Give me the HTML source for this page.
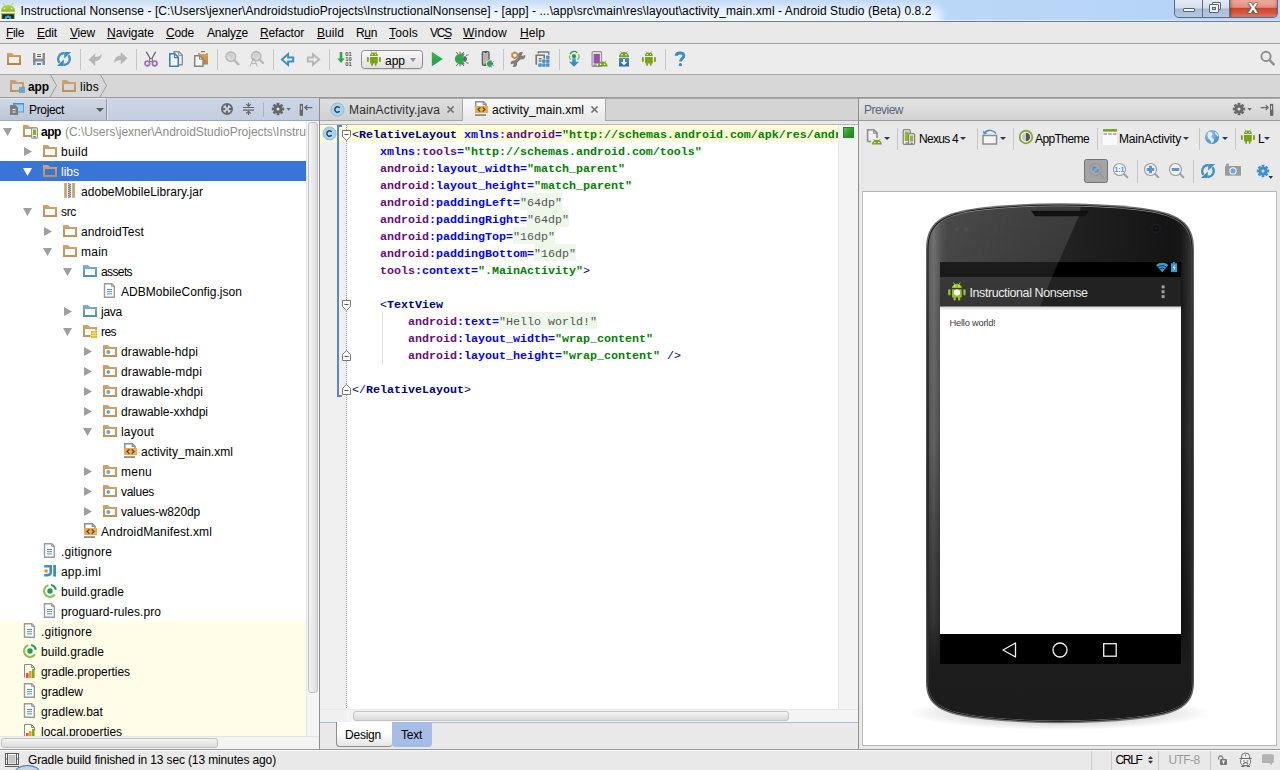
<!DOCTYPE html>
<html lang="en"><head><meta charset="utf-8"><title>Instructional Nonsense - Android Studio</title>
<style>
html,body{margin:0;padding:0;}
body{width:1280px;height:770px;overflow:hidden;position:relative;background:#e9e9e9;font-family:'Liberation Sans',sans-serif;font-size:12px;color:#000;}
div,span.t,svg.i{position:absolute;box-sizing:border-box;}
span.t{white-space:pre;}
svg.i{overflow:visible;}
u{text-decoration:underline;}
</style></head><body>
<div style="left:0px;top:0px;width:1280px;height:21px;background:linear-gradient(90deg,#c9ddf4 0%,#c3daf5 40%,#bad7f7 75%,#b4d3f6 100%);overflow:hidden;"><div style="left:-20px;top:6px;width:962px;height:30px;background:rgba(255,255,255,.75);border-radius:12px;filter:blur(5px);"></div><div style="left:0px;top:19px;width:1280px;height:2px;background:linear-gradient(180deg,rgba(255,255,255,0),rgba(255,255,255,.5));"></div></div><div style="left:0px;top:21px;width:1280px;height:1px;background:#6f7f96;"></div><svg class="i" style="left:0px;top:0px" width="16" height="20" viewBox="0 0 16 20"><defs><linearGradient id="lg" x1="0" y1="0" x2="0" y2="1"><stop offset="0" stop-color="#b5d94c"/><stop offset="1" stop-color="#8db82a"/></linearGradient><clipPath id="lc"><rect x="2.200" y="14.200" width="11.700" height="4.700"/></clipPath></defs><path d="M1.100 11.700V10.500a6.950 5.800 0 0 1 13.900 0v1.200z" fill="url(#lg)"/><path d="M3.300 3.400l1.400 1.900M12.800 3.400l-1.400 1.900" stroke="#a6cf45" stroke-width=".9" stroke-linecap="round"/><circle cx="4.500" cy="8.500" r=".8" fill="#f4fadf"/><circle cx="11.600" cy="8.500" r=".8" fill="#f4fadf"/><rect x="1.100" y="13.100" width="13.900" height="5.800" fill="#9bc63a"/><rect x="2.200" y="14.200" width="11.700" height="4.700" fill="#2b2530"/><g clip-path="url(#lc)"><path d="M8.00 15.00L9.15 16.53L11.04 16.26L10.77 18.15L12.30 19.30L10.77 20.45L11.04 22.34L9.15 22.07L8.00 23.60L6.85 22.07L4.96 22.34L5.23 20.45L3.70 19.30L5.23 18.15L4.96 16.26L6.85 16.53z" fill="#33b5e5"/><circle cx="8" cy="19.300" r="1.400" fill="#15151a"/></g></svg><span class="t" style="left:20.5px;top:3px;line-height:16px;color:#000;letter-spacing:0.069px;">Instructional Nonsense - [C:\Users\jexner\AndroidstudioProjects\InstructionalNonsense] - [app] - ...\app\src\main\res\layout\activity_main.xml - Android Studio (Beta) 0.8.2</span><div style="left:1174px;top:0px;width:104px;height:18px;border:1px solid #5a6b85;border-top:none;border-radius:0 0 5px 5px;background:linear-gradient(180deg,#e3ecf6 0%,#d3deec 48%,#a9bbd4 52%,#b7c8df 100%);overflow:hidden;"><div style="left:27px;top:0px;width:1px;height:18px;background:#5a6b85;"></div><div style="left:54px;top:0px;width:1px;height:18px;background:#5a6b85;"></div><div style="left:55px;top:-1px;width:48px;height:18px;background:linear-gradient(180deg,#f0b3a8 0%,#e48c7c 46%,#cc452d 52%,#d45a42 80%,#e08a78 100%);box-shadow:inset 2px 0 3px -1px rgba(120,20,10,.5),inset -2px 0 3px -1px rgba(120,20,10,.5);"></div><div style="left:8px;top:8px;width:12px;height:4px;background:#f4f4f4;border:1px solid #55607a;border-radius:1px;"></div><div style="left:37px;top:2px;width:9px;height:8px;background:#f4f4f4;border:1px solid #55607a;border-radius:1px;"></div><div style="left:34px;top:4px;width:10px;height:9px;background:#f4f4f4;border:1px solid #55607a;border-radius:1px;"></div><div style="left:37px;top:7px;width:4px;height:3px;background:#b9c8dd;border:1px solid #55607a;"></div><span class="t" style="left:73px;top:-3.500px;font-size:18px;font-weight:700;line-height:20px;color:#fff;text-shadow:0 0 1px #222,0 0 1px #333,0 0 2px #444;">x</span></div><div style="left:0px;top:22px;width:1280px;height:21px;background:#e9e9e9;"></div><div style="left:0px;top:43px;width:1280px;height:1px;background:#a0a0a0;"></div><span class="t" style="left:6px;top:25px;line-height:16px;color:#000;letter-spacing:-0.336px;"><u>F</u>ile</span><span class="t" style="left:37px;top:25px;line-height:16px;color:#000;letter-spacing:-0.172px;"><u>E</u>dit</span><span class="t" style="left:70px;top:25px;line-height:16px;color:#000;letter-spacing:-0.199px;"><u>V</u>iew</span><span class="t" style="left:107px;top:25px;line-height:16px;color:#000;letter-spacing:-0.047px;"><u>N</u>avigate</span><span class="t" style="left:166px;top:25px;line-height:16px;color:#000;letter-spacing:-0.172px;"><u>C</u>ode</span><span class="t" style="left:207px;top:25px;line-height:16px;color:#000;letter-spacing:-0.243px;">Analy<u>z</u>e</span><span class="t" style="left:260px;top:25px;line-height:16px;color:#000;letter-spacing:-0.170px;"><u>R</u>efactor</span><span class="t" style="left:317px;top:25px;line-height:16px;color:#000;letter-spacing:0.062px;"><u>B</u>uild</span><span class="t" style="left:356px;top:25px;line-height:16px;color:#000;letter-spacing:-0.339px;">R<u>u</u>n</span><span class="t" style="left:389px;top:25px;line-height:16px;color:#000;letter-spacing:0.197px;"><u>T</u>ools</span><span class="t" style="left:430px;top:25px;line-height:16px;color:#000;letter-spacing:-1.229px;">VC<u>S</u></span><span class="t" style="left:463px;top:25px;line-height:16px;color:#000;letter-spacing:0.219px;"><u>W</u>indow</span><span class="t" style="left:520px;top:25px;line-height:16px;color:#000;letter-spacing:0.078px;"><u>H</u>elp</span><div style="left:0px;top:44px;width:1280px;height:30px;background:#ececec;"></div><div style="left:80px;top:49px;width:1px;height:21px;background:#c4c4c4;"></div><div style="left:136px;top:49px;width:1px;height:21px;background:#c4c4c4;"></div><div style="left:217px;top:49px;width:1px;height:21px;background:#c4c4c4;"></div><div style="left:273px;top:49px;width:1px;height:21px;background:#c4c4c4;"></div><div style="left:329px;top:49px;width:1px;height:21px;background:#c4c4c4;"></div><div style="left:503px;top:49px;width:1px;height:21px;background:#c4c4c4;"></div><div style="left:559px;top:49px;width:1px;height:21px;background:#c4c4c4;"></div><div style="left:665px;top:49px;width:1px;height:21px;background:#c4c4c4;"></div><svg class="i" style="left:6px;top:51px" width="16" height="16" viewBox="0 0 16 16"><defs><linearGradient id="g1" x1="0" y1="0" x2="0" y2="1"><stop offset="0" stop-color="#d2a566"/><stop offset="1" stop-color="#b9803f"/></linearGradient></defs><path d="M1 2h5l2 2h7v10H1z" fill="url(#g1)"/><rect x="3" y="6" width="10" height="6" fill="#efefef"/></svg><svg class="i" style="left:31px;top:51px" width="16" height="16" viewBox="0 0 16 16"><path d="M2 2h12v12H2z" fill="#8c8c8c"/><rect x="4.500" y="2" width="7" height="5.500" fill="#fbfbfb"/><path d="M6 3.700h4M6 5.500h4" stroke="#555" stroke-width="1"/><rect x="4.500" y="10.500" width="7" height="3.500" fill="#ececec"/><rect x="6" y="12" width="4" height="2" fill="#3a8dc6"/></svg><svg class="i" style="left:56px;top:51px" width="16" height="16" viewBox="0 0 16 16"><path d="M8 2.200A5.800 5.800 0 0 0 3.600 11.800" fill="none" stroke="#3f8fc3" stroke-width="2.200"/><path d="M.900 14.900h6.900V8.400z" fill="#3f8fc3"/><path d="M8 13.800A5.800 5.800 0 0 0 12.400 4.200" fill="none" stroke="#3f8fc3" stroke-width="2.200"/><path d="M15.100 1.100H8.200v6.500z" fill="#3f8fc3"/></svg><svg class="i" style="left:87px;top:51px" width="16" height="16" viewBox="0 0 16 16"><path d="M1.700 8.700L8.200 2.300v3.600c2.500 0 5.300-.6 6.200-3.300.5 4.600-2.200 7.600-6.200 7.600V15z" fill="#b6b6b6"/></svg><svg class="i" style="left:112px;top:51px" width="16" height="16" viewBox="0 0 16 16"><path d="M15.300 7.300L8.800 1v3.600C4.800 4.600 2 7.600 2.500 12.200c.9-2.700 3.800-3.300 6.300-3.300v4.700z" fill="#b6b6b6"/></svg><svg class="i" style="left:143px;top:51px" width="16" height="16" viewBox="0 0 16 16"><path d="M3.300 .8l5.400 9.500M12.700 .8L7.300 10.300" stroke="#555" stroke-width="1.100" fill="none"/><rect x="6.700" y="7.800" width="2.600" height="2.800" fill="#f4f4f4" stroke="#555" stroke-width=".8"/><circle cx="4.300" cy="12.500" r="2.300" fill="none" stroke="#a06cc0" stroke-width="1.700"/><circle cx="11.700" cy="12.500" r="2.300" fill="none" stroke="#a06cc0" stroke-width="1.700"/></svg><svg class="i" style="left:168px;top:51px" width="16" height="16" viewBox="0 0 16 16"><path d="M6 .7h5l3.300 3.300v9.800H6z" fill="#f2f2f2" stroke="#909090" stroke-width="1.400"/><path d="M10.600 .7v3.700h3.700" fill="none" stroke="#909090" stroke-width="1"/><path d="M1.800 2.800h5l3.500 3.500v9H1.800z" fill="#f6f8fa" stroke="#3b82b4" stroke-width="1.600"/><path d="M6.500 2.800v3.800h3.800" fill="none" stroke="#3b82b4" stroke-width="1.200"/></svg><svg class="i" style="left:193px;top:51px" width="16" height="16" viewBox="0 0 16 16"><defs><linearGradient id="g2" x1="0" y1="0" x2="0" y2="1"><stop offset="0" stop-color="#d9a55c"/><stop offset="1" stop-color="#bd7f35"/></linearGradient></defs><path d="M5 2h2.200v.9h5.600V2H15v11.500H5z" fill="url(#g2)"/><path d="M8 .7h4" stroke="#666" stroke-width="1"/><path d="M1.700 4.700h5l3.300 3.300v7.300H1.700z" fill="#f4f4f4" stroke="#858585" stroke-width="1.500"/><path d="M6.500 4.700v3.500H10" fill="none" stroke="#858585" stroke-width="1"/></svg><svg class="i" style="left:224px;top:51px" width="16" height="16" viewBox="0 0 16 16"><circle cx="6.8" cy="5.7" r="4.7" fill="#dcdcdc" stroke="#b9b9b9" stroke-width="1.700"/><circle cx="6.8" cy="4.7" r="2.35" fill="#c9c9c9" opacity=".7"/><path d="M10.184 9.084L14.5 13.3" stroke="#b9b9b9" stroke-width="2.400" stroke-linecap="round"/></svg><svg class="i" style="left:249px;top:51px" width="16" height="16" viewBox="0 0 16 16"><circle cx="7.2" cy="5.2" r="4.5" fill="#dcdcdc" stroke="#b9b9b9" stroke-width="1.700"/><circle cx="7.2" cy="4.2" r="2.25" fill="#c9c9c9" opacity=".7"/><path d="M10.44 8.44L14 12" stroke="#b9b9b9" stroke-width="2.400" stroke-linecap="round"/><path d="M1 15.500L4.300 7.600h.8L8.400 15.500M2.300 12.600h4.800" fill="none" stroke="#b0b0b0" stroke-width="1"/></svg><svg class="i" style="left:280px;top:51px" width="16" height="16" viewBox="0 0 16 16"><path d="M1.900 8.500L8.100 3v3.500h5.100v4H8.100V14z" fill="#f4f4f4" stroke="#3a8ec6" stroke-width="1.900" stroke-linejoin="miter"/></svg><svg class="i" style="left:305px;top:51px" width="16" height="16" viewBox="0 0 16 16"><path d="M14.100 8.500L7.900 3v3.500H2.800v4h5.100V14z" fill="#ececec" stroke="#b6b6b6" stroke-width="1.900"/></svg><svg class="i" style="left:337px;top:51px" width="16" height="16" viewBox="0 0 16 16"><path d="M2.700 1h2.600v6.500h2.400L4 12 .300 7.500h2.400z" fill="#2fa84f"/><g font-family="Liberation Sans,sans-serif" font-size="6" font-weight="700" fill="#555"><text x="8.300" y="5.300" textLength="6.500" lengthAdjust="spacingAndGlyphs">01</text><text x="8.300" y="10.300" textLength="6.500" lengthAdjust="spacingAndGlyphs">10</text><text x="8.300" y="15.300" textLength="6.500" lengthAdjust="spacingAndGlyphs">01</text></g></svg><svg class="i" style="left:428px;top:51px" width="16" height="16" viewBox="0 0 16 16"><defs><linearGradient id="g3" x1="0" y1="0" x2="0" y2="1"><stop offset="0" stop-color="#3cb85a"/><stop offset="1" stop-color="#249743"/></linearGradient></defs><path d="M3.800 .8L14.800 8 3.800 15.200z" fill="url(#g3)"/></svg><svg class="i" style="left:453px;top:51px" width="16" height="16" viewBox="0 0 16 16"><path d="M11.600 2.800C5.500 1.300 1.900 4.500 1.900 8S5.500 14.700 11.600 13.200Q8.600 8 11.600 2.800z" fill="#2fa84f"/><path d="M10.600 5.300c1.700-.3 3.400 1 3.400 2.700s-1.700 3-3.400 2.700Q9.300 8 10.600 5.300z" fill="#666"/><path d="M3.200 1l2 2.300M7 .700v2M10.800 1L9.300 3M3.200 15l2-2.300M7 15.300v-2M10.800 15L9.300 13M12.600 5.600c.3-1.300 1.400-1.800 3-1.700M12.600 10.400c.3 1.300 1.400 1.800 3 1.700" fill="none" stroke="#555" stroke-width=".9"/><path d="M2.300 8h7" stroke="#23913f" stroke-width=".6"/></svg><svg class="i" style="left:479px;top:51px" width="16" height="16" viewBox="0 0 16 16"><rect x="3.300" y=".500" width="6.700" height="13.800" rx="1.300" fill="#b4b4b4" stroke="#555" stroke-width="1.200"/><rect x="5.700" y=".800" width="1.800" height=".900" fill="#111"/><rect x="5.700" y="12.600" width="1.800" height=".900" fill="#333"/><circle cx="11" cy="12.700" r="4.200" fill="#ececec"/><g transform="translate(6.700 8.400) scale(.54)"><path d="M11.600 2.800C5.500 1.300 1.900 4.500 1.900 8S5.500 14.700 11.600 13.200Q8.600 8 11.600 2.800z" fill="#2fa84f"/><path d="M10.600 5.300c1.700-.3 3.400 1 3.400 2.700s-1.700 3-3.400 2.700Q9.300 8 10.600 5.300z" fill="#666"/><path d="M3.200 1l2 2.300M7 .700v2M10.800 1L9.300 3M3.200 15l2-2.300M7 15.300v-2M10.800 15L9.300 13M12.600 5.600c.3-1.300 1.400-1.800 3-1.700M12.600 10.400c.3 1.300 1.400 1.800 3 1.700" fill="none" stroke="#555" stroke-width=".9"/><path d="M2.300 8h7" stroke="#23913f" stroke-width=".6"/></g></svg><svg class="i" style="left:510px;top:51px" width="16" height="16" viewBox="0 0 16 16"><path d="M4 12.600L11.400 5.200" stroke="#7d7d7d" stroke-width="3.200"/><circle cx="11.600" cy="4.700" r="3.700" fill="#7d7d7d"/><path d="M11.300 5l2-4.500 3.500 3.200z" fill="#ececec"/><circle cx="3.900" cy="12.700" r="3.200" fill="#7d7d7d"/><path d="M4.200 12.400l-2 4.300-3.300-3z" fill="#ececec"/><path d="M4.800 .300l3.500 2v4l-3.500 2-3.500-2v-4z" fill="#c98c45"/><circle cx="4.800" cy="4.300" r="1.700" fill="#ececec"/></svg><svg class="i" style="left:535px;top:51px" width="16" height="16" viewBox="0 0 16 16"><path d="M3.300 2.500V1h10.400v2.700" fill="none" stroke="#777" stroke-width="1.400"/><path d="M1.200 13.800V4.300h8v3.500" fill="none" stroke="#777" stroke-width="1.600"/><path d="M3.700 7.800h3M3.700 10h3" stroke="#444" stroke-width="1"/><rect x="11.2" y="4.7" width="3.200" height="3.200" fill="#2f7fb8"/><rect x="7.3" y="8.6" width="3.200" height="3.200" fill="#2f7fb8"/><rect x="11.2" y="8.6" width="3.200" height="3.200" fill="#2f7fb8"/><rect x="3.4" y="12.5" width="3.200" height="3.200" fill="#2f7fb8"/><rect x="7.3" y="12.5" width="3.200" height="3.200" fill="#2f7fb8"/><rect x="11.2" y="12.5" width="3.200" height="3.200" fill="#2f7fb8"/><path d="M12.800 4.700v3.200M11.200 6.300h3.200M8.900 8.600v3.200M7.300 10.200h3.200M12.800 8.600v3.200M11.200 10.200h3.200M5 12.500v3.200M3.400 14.100h3.200M8.900 12.500v3.200M7.300 14.100h3.200M12.800 12.500v3.200M11.200 14.100h3.200" stroke="#6fb0de" stroke-width=".5"/></svg><svg class="i" style="left:566px;top:51px" width="16" height="16" viewBox="0 0 16 16"><defs><linearGradient id="g4" x1="0" y1="0" x2="0" y2="1"><stop offset="0" stop-color="#4a9fd3"/><stop offset="1" stop-color="#2f7fb3"/></linearGradient></defs><path d="M11.300 1.700A4.500 4.500 0 0 0 4 3.200" fill="none" stroke="#2f9e4d" stroke-width="1.400"/><path d="M3.600 4.500A4.500 4.500 0 0 0 4.700 8.800M12.300 3a4.500 4.500 0 0 1-1 5.800" fill="none" stroke="#82c15a" stroke-width="1.400"/><circle cx="8" cy="5.200" r="2.100" fill="#2a9b4d"/><path d="M6.200 7.300h3.600v3.400H13L8 15.800 3 10.700h3.200z" fill="url(#g4)"/></svg><svg class="i" style="left:591px;top:51px" width="16" height="16" viewBox="0 0 16 16"><rect x="1.100" y=".600" width="9.300" height="14.800" rx="1" fill="#f4f4f4" stroke="#8d8d8d" stroke-width="1.200"/><rect x="2.600" y="2.800" width="6.300" height="9.800" fill="#9650b0"/><rect x="2.500" y="13.600" width="3" height="1" fill="#555"/><g transform="translate(6.800 9.600) scale(.98)"><g fill="#7aa21d"><path d="M0 6a5 5 0 0 1 10 0z"/><path d="M1.500 .3l1.500 2M8.500 .3L7 2.300" stroke="#7aa21d" stroke-width=".8" fill="none"/></g><circle cx="3" cy="3.800" r=".8" fill="#fff"/><circle cx="7" cy="3.800" r=".8" fill="#fff"/></g></svg><svg class="i" style="left:616px;top:51px" width="16" height="16" viewBox="0 0 16 16"><defs><linearGradient id="g5" x1="0" y1="0" x2="0" y2="1"><stop offset="0" stop-color="#4d90bb"/><stop offset="1" stop-color="#2f6d99"/></linearGradient></defs><g transform="translate(3 0)"><g fill="#7aa21d"><path d="M0 6a5 5 0 0 1 10 0z"/><path d="M1.500 .3l1.500 2M8.500 .3L7 2.300" stroke="#7aa21d" stroke-width=".8" fill="none"/></g><circle cx="3" cy="3.800" r=".8" fill="#fff"/><circle cx="7" cy="3.800" r=".8" fill="#fff"/></g><rect x="3" y="6.800" width="10" height="8.700" fill="url(#g5)"/><path d="M7 8h2v3h2.200L8 14.300 4.800 11H7z" fill="#fff"/></svg><svg class="i" style="left:641px;top:51px" width="16" height="16" viewBox="0 0 16 16"><g fill="#7aa21d"><path d="M4 5.900h7.800v6a.7.700 0 0 1-.7.700H4.700a.7.700 0 0 1-.7-.7z"/><path d="M4 4.900a3.900 3.300 0 0 1 7.800 0z"/><rect x=".900" y="5.900" width="1.900" height="5" rx=".9"/><rect x="13" y="5.900" width="1.900" height="5" rx=".9"/><rect x="5.200" y="12" width="1.800" height="2.900" rx=".8"/><rect x="8.800" y="12" width="1.800" height="2.900" rx=".8"/><path d="M5.200 .500l1 1.600M10.600 .500l-1 1.600" stroke="#7aa21d" stroke-width=".8" fill="none"/></g><circle cx="6.200" cy="3.400" r=".55" fill="#fff"/><circle cx="9.600" cy="3.400" r=".55" fill="#fff"/></svg><svg class="i" style="left:672px;top:51px" width="16" height="16" viewBox="0 0 16 16"><path d="M4 4.700C4.500 1.200 11.500 1 11.900 4.600c.3 2.500-3.500 3-3.500 5.900" fill="none" stroke="#3e8bc0" stroke-width="2.800"/><circle cx="8.400" cy="13.700" r="1.600" fill="#3e8bc0"/></svg><div style="left:361px;top:50px;width:62px;height:19px;border:1px solid #8e8e8e;border-radius:3.500px;background:linear-gradient(180deg,#f8f8f8,#e0e0e0);box-shadow:0 1px 0 rgba(0,0,0,.08);"></div><svg class="i" style="left:366px;top:51px" width="16" height="16" viewBox="0 0 16 16"><g fill="#7aa21d"><path d="M4 5.900h7.800v6a.7.700 0 0 1-.7.700H4.700a.7.700 0 0 1-.7-.7z"/><path d="M4 4.900a3.900 3.300 0 0 1 7.800 0z"/><rect x=".900" y="5.900" width="1.900" height="5" rx=".9"/><rect x="13" y="5.900" width="1.900" height="5" rx=".9"/><rect x="5.200" y="12" width="1.800" height="2.900" rx=".8"/><rect x="8.800" y="12" width="1.800" height="2.900" rx=".8"/><path d="M5.200 .500l1 1.600M10.600 .500l-1 1.600" stroke="#7aa21d" stroke-width=".8" fill="none"/></g><circle cx="6.200" cy="3.400" r=".55" fill="#fff"/><circle cx="9.600" cy="3.400" r=".55" fill="#fff"/></svg><span class="t" style="left:385px;top:52.5px;line-height:16px;color:#000;letter-spacing:-0.010px;">app</span><div style="left:410px;top:58px;width:0px;height:0px;border-left:3.500px solid transparent;border-right:3.500px solid transparent;border-top:4px solid #8c8c8c;"></div><svg class="i" style="left:1259px;top:51px" width="16" height="16" viewBox="0 0 16 16"><circle cx="7" cy="5.400" r="4.600" fill="none" stroke="#8e8e8e" stroke-width="1.900"/><path d="M10.500 9l4.200 4.300" stroke="#8e8e8e" stroke-width="2.500" stroke-linecap="round"/></svg><div style="left:0px;top:74px;width:1280px;height:24px;background:#d7d7d7;border-top:1px solid #a6a6a6;"></div><div style="left:0px;top:97px;width:1280px;height:1px;background:#9a9a9a;"></div><svg class="i" style="left:9px;top:78px" width="16" height="16" viewBox="0 0 16 16"><defs><linearGradient id="g6" x1="0" y1="0" x2="0" y2="1"><stop offset="0" stop-color="#cba671"/><stop offset="1" stop-color="#bd9158"/></linearGradient></defs><path d="M1 2h5l2 2h7v10H1z" fill="url(#g6)"/><rect x="3" y="6" width="10" height="6" fill="#d7d7d7"/><rect x="10" y="9" width="6" height="6" fill="#6ea6cf"/></svg><span class="t" style="left:28px;top:79px;line-height:16px;color:#000;font-weight:700;letter-spacing:-0.115px;">app</span><svg class="i" style="left:49px;top:74px" width="9" height="23" viewBox="0 0 9 23"><path d="M1 0L7.5 11.5L1 23" fill="none" stroke="#9c9c9c" stroke-width="1"/></svg><svg class="i" style="left:61px;top:78px" width="16" height="16" viewBox="0 0 16 16"><defs><linearGradient id="g7" x1="0" y1="0" x2="0" y2="1"><stop offset="0" stop-color="#cba671"/><stop offset="1" stop-color="#bd9158"/></linearGradient></defs><path d="M1 2h5l2 2h7v10H1z" fill="url(#g7)"/><rect x="3" y="6" width="10" height="6" fill="#d7d7d7"/></svg><span class="t" style="left:80px;top:79px;line-height:16px;color:#000;letter-spacing:0.246px;">libs</span><svg class="i" style="left:99px;top:74px" width="9" height="23" viewBox="0 0 9 23"><path d="M1 0L7.5 11.5L1 23" fill="none" stroke="#9c9c9c" stroke-width="1"/></svg><div style="left:0px;top:98px;width:319px;height:23px;background:linear-gradient(180deg,#ccd6e6,#c3cee0);border-bottom:1px solid #9aa7bd;"></div><div style="left:0px;top:98px;width:107px;height:22px;background:linear-gradient(180deg,#cfd7e4,#bcc6d6);border-right:1px solid #8f9aae;border-top:1px solid #e3e9f2;box-shadow:1px 0 0 #d9e0eb;"></div><svg class="i" style="left:8px;top:101px" width="16" height="16" viewBox="0 0 16 16"><rect x="5.500" y="2.500" width="10" height="8.500" fill="#a3d2f1" stroke="#5a9fd0"/><path d="M5 2.800h11" stroke="#3f8cc4" stroke-width="1.400"/><path d="M2 4h5.500L10 6.500V14H2z" fill="#7b7b7b"/><path d="M4.500 8.500h3M4.500 11h3" stroke="#fff" stroke-width="1.200"/></svg><span class="t" style="left:29px;top:102px;line-height:16px;color:#000;letter-spacing:-0.337px;">Project</span><div style="left:96px;top:108px;width:0px;height:0px;border-left:4px solid transparent;border-right:4px solid transparent;border-top:4.500px solid #5a5a5a;"></div><svg class="i" style="left:219px;top:101px" width="16" height="16" viewBox="0 0 16 16"><circle cx="8" cy="8" r="5" fill="none" stroke="#676767" stroke-width="2"/><path d="M8 3v3.200M8 9.800V13M3 8h3.200M9.800 8H13" stroke="#676767" stroke-width="2"/></svg><svg class="i" style="left:241px;top:101px" width="16" height="16" viewBox="0 0 16 16"><path d="M2 6.500h11M2 9.200h11" stroke="#676767" stroke-width="1.200"/><path d="M7.500 1.800v3.400M5.300 3.200l2.200 2.200 2.200-2.200M7.500 14v-3.400M5.300 12.500l2.200-2.200 2.200 2.200" fill="none" stroke="#676767" stroke-width="1.200"/></svg><div style="left:263px;top:102px;width:1px;height:15px;background:#a9b2c3;"></div><svg class="i" style="left:271px;top:101px" width="16" height="16" viewBox="0 0 16 16"><g transform="translate(7 8)" fill="#676767"><rect x="-1.400" y="-6.200" width="2.800" height="3" transform="rotate(0)"/><rect x="-1.400" y="-6.200" width="2.800" height="3" transform="rotate(45)"/><rect x="-1.400" y="-6.200" width="2.800" height="3" transform="rotate(90)"/><rect x="-1.400" y="-6.200" width="2.800" height="3" transform="rotate(135)"/><rect x="-1.400" y="-6.200" width="2.800" height="3" transform="rotate(180)"/><rect x="-1.400" y="-6.200" width="2.800" height="3" transform="rotate(225)"/><rect x="-1.400" y="-6.200" width="2.800" height="3" transform="rotate(270)"/><rect x="-1.400" y="-6.200" width="2.800" height="3" transform="rotate(315)"/><circle r="4.300"/><circle r="1.500" fill="#fff" fill-opacity=".8"/></g><path d="M15.500 7h4.200l-2.100 2.700z" fill="#676767"/></svg><svg class="i" style="left:298px;top:101px" width="16" height="16" viewBox="0 0 16 16"><rect x="2.400" y="3.500" width="2" height="10.500" fill="#e8ecf3" stroke="#676767" stroke-width="1.200"/><rect x="1.800" y="8.700" width="3.200" height="5.800" fill="#676767"/><path d="M6.800 6.600h7.500M9.300 4.200L6.800 6.600l2.500 2.400" fill="none" stroke="#676767" stroke-width="1.200"/></svg><div style="left:0px;top:121px;width:306px;height:615px;background:#fff;overflow:hidden;"><div style="left:0px;top:500px;width:307px;height:120px;background:#fffde7;"></div><div style="left:0px;top:40px;width:307px;height:20px;background:#3875d7;"></div><svg class="i" style="left:0px;top:2px" width="16" height="16" viewBox="0 0 16 16"><path d="M3 5h9L7.500 13z" fill="#9e9e9e"/></svg><svg class="i" style="left:22px;top:2px" width="16" height="16" viewBox="0 0 16 16"><defs><linearGradient id="g8" x1="0" y1="0" x2="0" y2="1"><stop offset="0" stop-color="#cba671"/><stop offset="1" stop-color="#bd9158"/></linearGradient></defs><path d="M1 2h5l2 2h7v10H1z" fill="url(#g8)"/><rect x="3" y="6" width="10" height="6" fill="#fff"/><rect x="9.700" y="5" width="5.700" height="10.300" rx=".8" fill="#fff" stroke="#8b8b8b" stroke-width="1.100"/><rect x="11" y="6.500" width="3.100" height="5.600" fill="#86b31b"/><rect x="11.300" y="13.300" width="2.500" height="1.100" fill="#444"/></svg><span class="t" style="left:41px;top:1px;line-height:20px;color:#000;font-weight:700;letter-spacing:-0.448px;">app</span><span class="t" style="left:65px;top:1px;line-height:20px;color:#8c8c8c;letter-spacing:-0.025px;">(C:\Users\jexner\AndroidStudioProjects\InstructionalNonsense\app)</span><svg class="i" style="left:20px;top:22px" width="16" height="16" viewBox="0 0 16 16"><path d="M4 4l8 4.500-8 4.500z" fill="#9e9e9e"/></svg><svg class="i" style="left:42px;top:22px" width="16" height="16" viewBox="0 0 16 16"><defs><linearGradient id="g9" x1="0" y1="0" x2="0" y2="1"><stop offset="0" stop-color="#cba671"/><stop offset="1" stop-color="#bd9158"/></linearGradient></defs><path d="M1 2h5l2 2h7v10H1z" fill="url(#g9)"/><rect x="3" y="6" width="10" height="6" fill="#fff"/></svg><span class="t" style="left:61px;top:21px;line-height:20px;color:#000;letter-spacing:0.328px;">build</span><svg class="i" style="left:20px;top:42px" width="16" height="16" viewBox="0 0 16 16"><path d="M3 5h9L7.500 13z" fill="#fff"/></svg><svg class="i" style="left:42px;top:42px" width="16" height="16" viewBox="0 0 16 16"><defs><linearGradient id="g10" x1="0" y1="0" x2="0" y2="1"><stop offset="0" stop-color="#cba671"/><stop offset="1" stop-color="#bd9158"/></linearGradient></defs><path d="M1 2h5l2 2h7v10H1z" fill="url(#g10)"/><rect x="3" y="6" width="10" height="6" fill="#3875d7"/></svg><span class="t" style="left:61px;top:41px;line-height:20px;color:#fff;">libs</span><svg class="i" style="left:62px;top:62px" width="16" height="16" viewBox="0 0 16 16"><rect x="2.200" y="0" width="2.700" height="14.800" fill="#c9a26c"/><rect x="10.100" y="0" width="2.800" height="14.800" fill="#c9a26c"/><rect x="4.900" y="0" width="5.200" height="14.800" fill="#f4f4f4"/><path d="M6 .5l3 1l-3 1l3 1l-3 1l3 1l-3 1l3 1l-3 1l3 1l-3 1l3 1l-3 1l3 1l-3 1" fill="none" stroke="#6a6a6a" stroke-width=".9"/></svg><span class="t" style="left:81px;top:61px;line-height:20px;color:#000;letter-spacing:0.037px;">adobeMobileLibrary.jar</span><svg class="i" style="left:20px;top:82px" width="16" height="16" viewBox="0 0 16 16"><path d="M3 5h9L7.500 13z" fill="#9e9e9e"/></svg><svg class="i" style="left:42px;top:82px" width="16" height="16" viewBox="0 0 16 16"><defs><linearGradient id="g11" x1="0" y1="0" x2="0" y2="1"><stop offset="0" stop-color="#cba671"/><stop offset="1" stop-color="#bd9158"/></linearGradient></defs><path d="M1 2h5l2 2h7v10H1z" fill="url(#g11)"/><rect x="3" y="6" width="10" height="6" fill="#fff"/></svg><span class="t" style="left:61px;top:81px;line-height:20px;color:#000;letter-spacing:-0.333px;">src</span><svg class="i" style="left:40px;top:102px" width="16" height="16" viewBox="0 0 16 16"><path d="M4 4l8 4.500-8 4.500z" fill="#9e9e9e"/></svg><svg class="i" style="left:62px;top:102px" width="16" height="16" viewBox="0 0 16 16"><defs><linearGradient id="g12" x1="0" y1="0" x2="0" y2="1"><stop offset="0" stop-color="#cba671"/><stop offset="1" stop-color="#bd9158"/></linearGradient></defs><path d="M1 2h5l2 2h7v10H1z" fill="url(#g12)"/><rect x="3" y="6" width="10" height="6" fill="#fff"/></svg><span class="t" style="left:81px;top:101px;line-height:20px;color:#000;letter-spacing:0.087px;">androidTest</span><svg class="i" style="left:40px;top:122px" width="16" height="16" viewBox="0 0 16 16"><path d="M3 5h9L7.500 13z" fill="#9e9e9e"/></svg><svg class="i" style="left:62px;top:122px" width="16" height="16" viewBox="0 0 16 16"><defs><linearGradient id="g13" x1="0" y1="0" x2="0" y2="1"><stop offset="0" stop-color="#cba671"/><stop offset="1" stop-color="#bd9158"/></linearGradient></defs><path d="M1 2h5l2 2h7v10H1z" fill="url(#g13)"/><rect x="3" y="6" width="10" height="6" fill="#fff"/></svg><span class="t" style="left:81px;top:121px;line-height:20px;color:#000;letter-spacing:0.246px;">main</span><svg class="i" style="left:60px;top:142px" width="16" height="16" viewBox="0 0 16 16"><path d="M3 5h9L7.500 13z" fill="#9e9e9e"/></svg><svg class="i" style="left:82px;top:142px" width="16" height="16" viewBox="0 0 16 16"><defs><linearGradient id="g14" x1="0" y1="0" x2="0" y2="1"><stop offset="0" stop-color="#7fb2d6"/><stop offset="1" stop-color="#4f8fbd"/></linearGradient></defs><path d="M1 2h5l2 2h7v10H1z" fill="url(#g14)"/><rect x="3" y="6" width="10" height="6" fill="#fff"/></svg><span class="t" style="left:101px;top:141px;line-height:20px;color:#000;letter-spacing:-0.615px;">assets</span><svg class="i" style="left:102px;top:162px" width="16" height="16" viewBox="0 0 16 16"><path d="M2.500 .700h7.200l2.600 2.600v10.900h-9.800z" fill="#fff" stroke="#9a9a9a" stroke-width="1.400"/><path d="M9.600 .700v2.700h2.700" fill="none" stroke="#9a9a9a" stroke-width="1"/><path d="M5 6.500h5M5 8.700h5M5 10.900h5" stroke="#4a90c2" stroke-width="1"/></svg><span class="t" style="left:121px;top:161px;line-height:20px;color:#000;letter-spacing:0.047px;">ADBMobileConfig.json</span><svg class="i" style="left:60px;top:182px" width="16" height="16" viewBox="0 0 16 16"><path d="M4 4l8 4.500-8 4.500z" fill="#9e9e9e"/></svg><svg class="i" style="left:82px;top:182px" width="16" height="16" viewBox="0 0 16 16"><defs><linearGradient id="g15" x1="0" y1="0" x2="0" y2="1"><stop offset="0" stop-color="#7fb2d6"/><stop offset="1" stop-color="#4f8fbd"/></linearGradient></defs><path d="M1 2h5l2 2h7v10H1z" fill="url(#g15)"/><rect x="3" y="6" width="10" height="6" fill="#fff"/></svg><span class="t" style="left:101px;top:181px;line-height:20px;color:#000;letter-spacing:-0.254px;">java</span><svg class="i" style="left:60px;top:202px" width="16" height="16" viewBox="0 0 16 16"><path d="M3 5h9L7.500 13z" fill="#9e9e9e"/></svg><svg class="i" style="left:82px;top:202px" width="16" height="16" viewBox="0 0 16 16"><defs><linearGradient id="g16" x1="0" y1="0" x2="0" y2="1"><stop offset="0" stop-color="#cba671"/><stop offset="1" stop-color="#bd9158"/></linearGradient></defs><path d="M1 2h5l2 2h7v10H1z" fill="url(#g16)"/><rect x="3" y="6" width="10" height="6" fill="#fff"/><rect x="8.5" y="7.5" width="7" height="8" fill="#fff"/><path d="M9 8h6v7H9z" fill="#e8a800"/><path d="M9 10.3h6M9 12.6h6M11 8v7M13 8v7" stroke="#fff3c0" stroke-width=".6"/></svg><span class="t" style="left:101px;top:201px;line-height:20px;color:#000;letter-spacing:-0.557px;">res</span><svg class="i" style="left:80px;top:222px" width="16" height="16" viewBox="0 0 16 16"><path d="M4 4l8 4.500-8 4.500z" fill="#9e9e9e"/></svg><svg class="i" style="left:102px;top:222px" width="16" height="16" viewBox="0 0 16 16"><defs><linearGradient id="g17" x1="0" y1="0" x2="0" y2="1"><stop offset="0" stop-color="#cba671"/><stop offset="1" stop-color="#bd9158"/></linearGradient></defs><path d="M1 2h5l2 2h7v10H1z" fill="url(#g17)"/><rect x="3" y="6" width="10" height="6" fill="#fff"/><circle cx="6.300" cy="9" r="1.900" fill="#68a5cf"/></svg><span class="t" style="left:121px;top:221px;line-height:20px;color:#000;letter-spacing:0.124px;">drawable-hdpi</span><svg class="i" style="left:80px;top:242px" width="16" height="16" viewBox="0 0 16 16"><path d="M4 4l8 4.500-8 4.500z" fill="#9e9e9e"/></svg><svg class="i" style="left:102px;top:242px" width="16" height="16" viewBox="0 0 16 16"><defs><linearGradient id="g18" x1="0" y1="0" x2="0" y2="1"><stop offset="0" stop-color="#cba671"/><stop offset="1" stop-color="#bd9158"/></linearGradient></defs><path d="M1 2h5l2 2h7v10H1z" fill="url(#g18)"/><rect x="3" y="6" width="10" height="6" fill="#fff"/><circle cx="6.300" cy="9" r="1.900" fill="#68a5cf"/></svg><span class="t" style="left:121px;top:241px;line-height:20px;color:#000;letter-spacing:0.177px;">drawable-mdpi</span><svg class="i" style="left:80px;top:262px" width="16" height="16" viewBox="0 0 16 16"><path d="M4 4l8 4.500-8 4.500z" fill="#9e9e9e"/></svg><svg class="i" style="left:102px;top:262px" width="16" height="16" viewBox="0 0 16 16"><defs><linearGradient id="g19" x1="0" y1="0" x2="0" y2="1"><stop offset="0" stop-color="#cba671"/><stop offset="1" stop-color="#bd9158"/></linearGradient></defs><path d="M1 2h5l2 2h7v10H1z" fill="url(#g19)"/><rect x="3" y="6" width="10" height="6" fill="#fff"/><circle cx="6.300" cy="9" r="1.900" fill="#68a5cf"/></svg><span class="t" style="left:121px;top:261px;line-height:20px;color:#000;letter-spacing:0.044px;">drawable-xhdpi</span><svg class="i" style="left:80px;top:282px" width="16" height="16" viewBox="0 0 16 16"><path d="M4 4l8 4.500-8 4.500z" fill="#9e9e9e"/></svg><svg class="i" style="left:102px;top:282px" width="16" height="16" viewBox="0 0 16 16"><defs><linearGradient id="g20" x1="0" y1="0" x2="0" y2="1"><stop offset="0" stop-color="#cba671"/><stop offset="1" stop-color="#bd9158"/></linearGradient></defs><path d="M1 2h5l2 2h7v10H1z" fill="url(#g20)"/><rect x="3" y="6" width="10" height="6" fill="#fff"/><circle cx="6.300" cy="9" r="1.900" fill="#68a5cf"/></svg><span class="t" style="left:121px;top:281px;line-height:20px;color:#000;letter-spacing:-0.026px;">drawable-xxhdpi</span><svg class="i" style="left:80px;top:302px" width="16" height="16" viewBox="0 0 16 16"><path d="M3 5h9L7.500 13z" fill="#9e9e9e"/></svg><svg class="i" style="left:102px;top:302px" width="16" height="16" viewBox="0 0 16 16"><defs><linearGradient id="g21" x1="0" y1="0" x2="0" y2="1"><stop offset="0" stop-color="#cba671"/><stop offset="1" stop-color="#bd9158"/></linearGradient></defs><path d="M1 2h5l2 2h7v10H1z" fill="url(#g21)"/><rect x="3" y="6" width="10" height="6" fill="#fff"/><circle cx="6.300" cy="9" r="1.900" fill="#68a5cf"/></svg><span class="t" style="left:121px;top:301px;line-height:20px;color:#000;letter-spacing:0.161px;">layout</span><svg class="i" style="left:122px;top:322px" width="16" height="16" viewBox="0 0 16 16"><path d="M2.750 5.500V.750h7.700L13 3.300V5.500" fill="#fff" stroke="#8d8d8d" stroke-width="1.500"/><path d="M10.200 .750V3.500H13" fill="none" stroke="#8d8d8d" stroke-width="1.200"/><rect x="2" y="5" width="13" height="7" fill="#f2a94b"/><path d="M7.300 6.300L5 8.500l2.300 2.200M9.700 6.300L12 8.500l-2.300 2.200" fill="none" stroke="#4f4a45" stroke-width="1.200"/><rect x="2" y="13.200" width="11" height="1.800" fill="#8d8d8d"/></svg><span class="t" style="left:141px;top:321px;line-height:20px;color:#000;letter-spacing:0.038px;">activity_main.xml</span><svg class="i" style="left:80px;top:342px" width="16" height="16" viewBox="0 0 16 16"><path d="M4 4l8 4.500-8 4.500z" fill="#9e9e9e"/></svg><svg class="i" style="left:102px;top:342px" width="16" height="16" viewBox="0 0 16 16"><defs><linearGradient id="g22" x1="0" y1="0" x2="0" y2="1"><stop offset="0" stop-color="#cba671"/><stop offset="1" stop-color="#bd9158"/></linearGradient></defs><path d="M1 2h5l2 2h7v10H1z" fill="url(#g22)"/><rect x="3" y="6" width="10" height="6" fill="#fff"/><circle cx="6.300" cy="9" r="1.900" fill="#68a5cf"/></svg><span class="t" style="left:121px;top:341px;line-height:20px;color:#000;letter-spacing:0.242px;">menu</span><svg class="i" style="left:80px;top:362px" width="16" height="16" viewBox="0 0 16 16"><path d="M4 4l8 4.500-8 4.500z" fill="#9e9e9e"/></svg><svg class="i" style="left:102px;top:362px" width="16" height="16" viewBox="0 0 16 16"><defs><linearGradient id="g23" x1="0" y1="0" x2="0" y2="1"><stop offset="0" stop-color="#cba671"/><stop offset="1" stop-color="#bd9158"/></linearGradient></defs><path d="M1 2h5l2 2h7v10H1z" fill="url(#g23)"/><rect x="3" y="6" width="10" height="6" fill="#fff"/><circle cx="6.300" cy="9" r="1.900" fill="#68a5cf"/></svg><span class="t" style="left:121px;top:361px;line-height:20px;color:#000;letter-spacing:-0.281px;">values</span><svg class="i" style="left:80px;top:382px" width="16" height="16" viewBox="0 0 16 16"><path d="M4 4l8 4.500-8 4.500z" fill="#9e9e9e"/></svg><svg class="i" style="left:102px;top:382px" width="16" height="16" viewBox="0 0 16 16"><defs><linearGradient id="g24" x1="0" y1="0" x2="0" y2="1"><stop offset="0" stop-color="#cba671"/><stop offset="1" stop-color="#bd9158"/></linearGradient></defs><path d="M1 2h5l2 2h7v10H1z" fill="url(#g24)"/><rect x="3" y="6" width="10" height="6" fill="#fff"/><circle cx="6.300" cy="9" r="1.900" fill="#68a5cf"/></svg><span class="t" style="left:121px;top:381px;line-height:20px;color:#000;letter-spacing:-0.132px;">values-w820dp</span><svg class="i" style="left:82px;top:402px" width="16" height="16" viewBox="0 0 16 16"><path d="M2.750 5.500V.750h7.700L13 3.300V5.500" fill="#fff" stroke="#8d8d8d" stroke-width="1.500"/><path d="M10.200 .750V3.500H13" fill="none" stroke="#8d8d8d" stroke-width="1.200"/><rect x="2" y="5" width="13" height="7" fill="#f2a94b"/><path d="M7.300 6.300L5 8.500l2.300 2.200M9.700 6.300L12 8.500l-2.300 2.200" fill="none" stroke="#4f4a45" stroke-width="1.200"/><rect x="2" y="13.200" width="11" height="1.800" fill="#8d8d8d"/></svg><span class="t" style="left:101px;top:401px;line-height:20px;color:#000;letter-spacing:0.120px;">AndroidManifest.xml</span><svg class="i" style="left:42px;top:422px" width="16" height="16" viewBox="0 0 16 16"><path d="M2.500 .700h7.200l2.600 2.600v10.900h-9.800z" fill="#fff" stroke="#9a9a9a" stroke-width="1.400"/><path d="M9.600 .700v2.700h2.700" fill="none" stroke="#9a9a9a" stroke-width="1"/><path d="M5 6.500h5M5 8.700h5M5 10.900h5" stroke="#4a90c2" stroke-width="1"/></svg><span class="t" style="left:61px;top:421px;line-height:20px;color:#000;letter-spacing:0.163px;">.gitignore</span><svg class="i" style="left:42px;top:442px" width="16" height="16" viewBox="0 0 16 16"><path d="M2.200 3.200h6.500v6.300c0 2.200-2 2.900-6.500 2.800" fill="none" stroke="#3f8fc6" stroke-width="2.600"/><circle cx="4.100" cy="8" r="2.100" fill="#e8871e" stroke="#fff" stroke-width=".7"/><path d="M12.600 2v11.600" stroke="#3f8fc6" stroke-width="2.800"/></svg><span class="t" style="left:61px;top:441px;line-height:20px;color:#000;letter-spacing:0.188px;">app.iml</span><svg class="i" style="left:42px;top:462px" width="16" height="16" viewBox="0 0 16 16"><path d="M6.45 2.20 A6 6 0 1 0 12.91 11.44" fill="none" stroke="#8cc152" stroke-width="2.100"/><path d="M9.04 2.09 A6 6 0 0 1 13.87 6.75" fill="none" stroke="#1f9d55" stroke-width="2.100"/><circle cx="8" cy="8" r="2.700" fill="#1f9d55"/></svg><span class="t" style="left:61px;top:461px;line-height:20px;color:#000;letter-spacing:0.079px;">build.gradle</span><svg class="i" style="left:42px;top:482px" width="16" height="16" viewBox="0 0 16 16"><path d="M2.500 .700h7.200l2.600 2.600v10.900h-9.800z" fill="#fff" stroke="#9a9a9a" stroke-width="1.400"/><path d="M9.600 .700v2.700h2.700" fill="none" stroke="#9a9a9a" stroke-width="1"/><path d="M5 6.500h5M5 8.700h5M5 10.900h5" stroke="#4a90c2" stroke-width="1"/></svg><span class="t" style="left:61px;top:481px;line-height:20px;color:#000;letter-spacing:0.071px;">proguard-rules.pro</span><svg class="i" style="left:22px;top:502px" width="16" height="16" viewBox="0 0 16 16"><path d="M2.500 .700h7.200l2.600 2.600v10.900h-9.800z" fill="#fff" stroke="#9a9a9a" stroke-width="1.400"/><path d="M9.600 .700v2.700h2.700" fill="none" stroke="#9a9a9a" stroke-width="1"/><path d="M5 6.500h5M5 8.700h5M5 10.900h5" stroke="#4a90c2" stroke-width="1"/></svg><span class="t" style="left:41px;top:501px;line-height:20px;color:#000;letter-spacing:0.163px;">.gitignore</span><svg class="i" style="left:22px;top:522px" width="16" height="16" viewBox="0 0 16 16"><path d="M6.45 2.20 A6 6 0 1 0 12.91 11.44" fill="none" stroke="#8cc152" stroke-width="2.100"/><path d="M9.04 2.09 A6 6 0 0 1 13.87 6.75" fill="none" stroke="#1f9d55" stroke-width="2.100"/><circle cx="8" cy="8" r="2.700" fill="#1f9d55"/></svg><span class="t" style="left:41px;top:521px;line-height:20px;color:#000;letter-spacing:0.079px;">build.gradle</span><svg class="i" style="left:22px;top:542px" width="16" height="16" viewBox="0 0 16 16"><path d="M2.500 14.5v-13h7l3 3v3" fill="none" stroke="#8a8a8a"/><path d="M9.5 1.500v3h3" fill="none" stroke="#8a8a8a"/><rect x="4" y="10" width="2.6" height="5" fill="#e0574a"/><rect x="7" y="8" width="2.6" height="7" fill="#ef9a2a"/><rect x="10" y="6" width="2.600" height="9" fill="#7cae2a"/></svg><span class="t" style="left:41px;top:541px;line-height:20px;color:#000;letter-spacing:-0.062px;">gradle.properties</span><svg class="i" style="left:22px;top:562px" width="16" height="16" viewBox="0 0 16 16"><path d="M2.500 .700h7.200l2.600 2.600v10.900h-9.800z" fill="#fff" stroke="#9a9a9a" stroke-width="1.400"/><path d="M9.600 .700v2.700h2.700" fill="none" stroke="#9a9a9a" stroke-width="1"/><path d="M5 6.500h5M5 8.700h5M5 10.900h5" stroke="#4a90c2" stroke-width="1"/></svg><span class="t" style="left:41px;top:561px;line-height:20px;color:#000;letter-spacing:-0.004px;">gradlew</span><svg class="i" style="left:22px;top:582px" width="16" height="16" viewBox="0 0 16 16"><path d="M2.500 .700h7.200l2.600 2.600v10.900h-9.800z" fill="#fff" stroke="#9a9a9a" stroke-width="1.400"/><path d="M9.600 .700v2.700h2.700" fill="none" stroke="#9a9a9a" stroke-width="1"/><path d="M5 6.500h5M5 8.700h5M5 10.900h5" stroke="#4a90c2" stroke-width="1"/></svg><span class="t" style="left:41px;top:581px;line-height:20px;color:#000;letter-spacing:0.055px;">gradlew.bat</span><svg class="i" style="left:22px;top:602px" width="16" height="16" viewBox="0 0 16 16"><path d="M2.500 14.5v-13h7l3 3v3" fill="none" stroke="#8a8a8a"/><path d="M9.5 1.500v3h3" fill="none" stroke="#8a8a8a"/><rect x="4" y="10" width="2.6" height="5" fill="#e0574a"/><rect x="7" y="8" width="2.6" height="7" fill="#ef9a2a"/><rect x="10" y="6" width="2.600" height="9" fill="#7cae2a"/></svg><span class="t" style="left:41px;top:601px;line-height:20px;color:#000;letter-spacing:-0.023px;">local.properties</span></div><div style="left:306px;top:121px;width:13px;height:615px;background:#f5f5f5;border-left:1px solid #e6e6e6;"></div><div style="left:308px;top:122px;width:10px;height:571px;background:linear-gradient(90deg,#f4f4f4,#dcdcdc);border:1px solid #c2c2c2;border-radius:3px;"></div><div style="left:0px;top:736px;width:319px;height:13px;background:#f3f3f3;border-top:1px solid #e4e4e4;"></div><div style="left:1px;top:738px;width:217px;height:10px;background:linear-gradient(180deg,#f4f4f4,#dcdcdc);border:1px solid #c2c2c2;border-radius:3px;"></div><div style="left:319px;top:98px;width:1px;height:651px;background:#8f8f8f;"></div><div style="left:320px;top:98px;width:538px;height:23px;background:#d4d4d4;border-top:1px solid #a8a8a8;border-bottom:1px solid #a8a8a8;"></div><div style="left:320px;top:99px;width:143px;height:21px;background:linear-gradient(180deg,#dedede,#d0d0d0);border-right:1px solid #a8a8a8;"></div><svg class="i" style="left:330px;top:102px" width="15" height="15" viewBox="0 0 16 16"><circle cx="8" cy="8" r="7" fill="#a6d4f2" stroke="#7fbbe6" stroke-width="1"/><path d="M10.300 6.200A2.900 2.900 0 1 0 10.300 9.800" fill="none" stroke="#333" stroke-width="1.400"/></svg><span class="t" style="left:349px;top:102px;line-height:16px;color:#2e2e2e;letter-spacing:0.148px;">MainActivity.java</span><svg class="i" style="left:443px;top:102px" width="15" height="15" viewBox="0 0 15 15"><path d="M4.500 4.500l6 6M10.500 4.500l-6 6" stroke="#6e6e6e" stroke-width="1.600"/></svg><div style="left:463px;top:99px;width:143px;height:25px;background:linear-gradient(180deg,#fafafa,#e9e9e9 80%);border-right:1px solid #a8a8a8;"></div><svg class="i" style="left:473px;top:101px" width="16" height="16" viewBox="0 0 16 16"><path d="M2.750 5.500V.750h7.700L13 3.300V5.500" fill="#fff" stroke="#8d8d8d" stroke-width="1.500"/><path d="M10.200 .750V3.500H13" fill="none" stroke="#8d8d8d" stroke-width="1.200"/><rect x="2" y="5" width="13" height="7" fill="#f2a94b"/><path d="M7.300 6.300L5 8.500l2.300 2.200M9.700 6.300L12 8.500l-2.300 2.200" fill="none" stroke="#4f4a45" stroke-width="1.200"/><rect x="2" y="13.200" width="11" height="1.800" fill="#8d8d8d"/></svg><span class="t" style="left:492px;top:102px;line-height:16px;color:#000;letter-spacing:0.038px;">activity_main.xml</span><svg class="i" style="left:587px;top:102px" width="15" height="15" viewBox="0 0 15 15"><path d="M4.500 4.500l6 6M10.500 4.500l-6 6" stroke="#6e6e6e" stroke-width="1.600"/></svg><div style="left:320px;top:121px;width:538px;height:4px;background:#e9e9e9;border-bottom:1px solid #b6b6b6;"></div><div style="left:320px;top:125px;width:518px;height:585px;background:#fff;"></div><div style="left:320px;top:125px;width:27px;height:586px;background:#f0f0f0;"></div><div style="left:320px;top:125px;width:518px;height:17px;background:#ffffd7;"></div><div style="left:337px;top:125px;width:2px;height:271.5px;background:#6187bf;"></div><div style="left:337px;top:125px;width:4.5px;height:1.5px;background:#6187bf;"></div><div style="left:337px;top:395px;width:4.5px;height:1.5px;background:#6187bf;"></div><div style="left:346px;top:125px;width:1px;height:584px;background:repeating-linear-gradient(180deg,#9a9a9a 0,#9a9a9a 1px,transparent 1px,transparent 2px);"></div><div style="left:382px;top:312px;width:1px;height:52px;background:#e0e0e0;"></div><svg class="i" style="left:322px;top:126px" width="15" height="15" viewBox="0 0 16 16"><circle cx="8" cy="8" r="7" fill="#a6d4f2" stroke="#7fbbe6" stroke-width="1"/><path d="M10.300 6.200A2.900 2.900 0 1 0 10.300 9.800" fill="none" stroke="#333" stroke-width="1.400"/></svg><svg class="i" style="left:341px;top:130px" width="11" height="12" viewBox="0 0 11 12"><path d="M1.500 .500h8v6L5.500 10.500 1.500 6.500z" fill="#fff" stroke="#7a7a7a"/><path d="M3.500 4.500h4" stroke="#555"/></svg><svg class="i" style="left:341px;top:300px" width="11" height="12" viewBox="0 0 11 12"><path d="M1.500 .500h8v6L5.500 10.500 1.500 6.500z" fill="#fff" stroke="#7a7a7a"/><path d="M3.500 4.500h4" stroke="#555"/></svg><svg class="i" style="left:341px;top:350px" width="11" height="12" viewBox="0 0 11 12"><path d="M1.500 10.500h8v-6L5.500 .500 1.500 4.500z" fill="#fff" stroke="#7a7a7a"/><path d="M3.500 6.500h4" stroke="#555"/></svg><svg class="i" style="left:341px;top:384px" width="11" height="12" viewBox="0 0 11 12"><path d="M1.500 10.500h8v-6L5.500 .500 1.500 4.500z" fill="#fff" stroke="#7a7a7a"/><path d="M3.500 6.500h4" stroke="#555"/></svg><div style="left:352px;top:127px;width:486px;height:586px;overflow:hidden;font-family:'Liberation Mono',monospace;font-size:11.667px;line-height:17px;"><span class="t" style="left:0px;top:0px;color:#000080;">&lt;</span><span class="t" style="left:7px;top:0px;color:#000080;font-weight:700;">RelativeLayout </span><span class="t" style="left:112px;top:0px;color:#0000ff;font-weight:700;">xmlns</span><span class="t" style="left:147px;top:0px;color:#660e7a;font-weight:700;">:android</span><span class="t" style="left:203px;top:0px;color:#0000ff;font-weight:700;">=</span><span class="t" style="left:210px;top:0px;color:#008000;font-weight:700;">"http://schemas.android.com/apk/res/android"</span><span class="t" style="left:28px;top:17px;color:#0000ff;font-weight:700;">xmlns</span><span class="t" style="left:63px;top:17px;color:#660e7a;font-weight:700;">:tools</span><span class="t" style="left:105px;top:17px;color:#0000ff;font-weight:700;">=</span><span class="t" style="left:112px;top:17px;color:#008000;font-weight:700;">"http://schemas.android.com/tools"</span><span class="t" style="left:28px;top:34px;color:#660e7a;font-weight:700;">android</span><span class="t" style="left:77px;top:34px;color:#0000ff;font-weight:700;">:layout_width=</span><span class="t" style="left:175px;top:34px;color:#008000;font-weight:700;">"match_parent"</span><span class="t" style="left:28px;top:51px;color:#660e7a;font-weight:700;">android</span><span class="t" style="left:77px;top:51px;color:#0000ff;font-weight:700;">:layout_height=</span><span class="t" style="left:182px;top:51px;color:#008000;font-weight:700;">"match_parent"</span><span class="t" style="left:28px;top:68px;color:#660e7a;font-weight:700;">android</span><span class="t" style="left:77px;top:68px;color:#0000ff;font-weight:700;">:paddingLeft=</span><div style="left:168px;top:66px;width:42px;height:17px;background:#edf7ea"></div><span class="t" style="left:168px;top:68px;color:#555;">"64dp"</span><span class="t" style="left:28px;top:85px;color:#660e7a;font-weight:700;">android</span><span class="t" style="left:77px;top:85px;color:#0000ff;font-weight:700;">:paddingRight=</span><div style="left:175px;top:83px;width:42px;height:17px;background:#edf7ea"></div><span class="t" style="left:175px;top:85px;color:#555;">"64dp"</span><span class="t" style="left:28px;top:102px;color:#660e7a;font-weight:700;">android</span><span class="t" style="left:77px;top:102px;color:#0000ff;font-weight:700;">:paddingTop=</span><div style="left:161px;top:100px;width:42px;height:17px;background:#edf7ea"></div><span class="t" style="left:161px;top:102px;color:#555;">"16dp"</span><span class="t" style="left:28px;top:119px;color:#660e7a;font-weight:700;">android</span><span class="t" style="left:77px;top:119px;color:#0000ff;font-weight:700;">:paddingBottom=</span><div style="left:182px;top:117px;width:42px;height:17px;background:#edf7ea"></div><span class="t" style="left:182px;top:119px;color:#555;">"16dp"</span><span class="t" style="left:28px;top:136px;color:#660e7a;font-weight:700;">tools</span><span class="t" style="left:63px;top:136px;color:#0000ff;font-weight:700;">:context=</span><span class="t" style="left:126px;top:136px;color:#008000;font-weight:700;">".MainActivity"</span><span class="t" style="left:231px;top:136px;color:#000080;">&gt;</span><span class="t" style="left:28px;top:170px;color:#000080;">&lt;</span><span class="t" style="left:35px;top:170px;color:#000080;font-weight:700;">TextView</span><span class="t" style="left:56px;top:187px;color:#660e7a;font-weight:700;">android</span><span class="t" style="left:105px;top:187px;color:#0000ff;font-weight:700;">:text=</span><div style="left:147px;top:185px;width:98px;height:17px;background:#edf7ea"></div><span class="t" style="left:147px;top:187px;color:#555;">"Hello world!"</span><span class="t" style="left:56px;top:204px;color:#660e7a;font-weight:700;">android</span><span class="t" style="left:105px;top:204px;color:#0000ff;font-weight:700;">:layout_width=</span><span class="t" style="left:203px;top:204px;color:#008000;font-weight:700;">"wrap_content"</span><span class="t" style="left:56px;top:221px;color:#660e7a;font-weight:700;">android</span><span class="t" style="left:105px;top:221px;color:#0000ff;font-weight:700;">:layout_height=</span><span class="t" style="left:210px;top:221px;color:#008000;font-weight:700;">"wrap_content"</span><span class="t" style="left:308px;top:221px;color:#000080;"> /&gt;</span><span class="t" style="left:0px;top:255px;color:#000080;">&lt;/</span><span class="t" style="left:14px;top:255px;color:#000080;font-weight:700;">RelativeLayout</span><span class="t" style="left:112px;top:255px;color:#000080;">&gt;</span></div><div style="left:838px;top:125px;width:20px;height:597px;background:#f3f3f3;border-left:1px solid #e6e6e6;"></div><div style="left:842px;top:126px;width:13px;height:13px;background:#fff;"></div><div style="left:843px;top:127px;width:11px;height:11px;background:linear-gradient(135deg,#58c458 0%,#2fa12f 45%,#188a18 100%);border:1px solid #1c8c1c;"></div><div style="left:320px;top:709px;width:538px;height:13px;background:#f4f4f4;border-top:1px solid #e8e8e8;"></div><div style="left:320px;top:709px;width:27px;height:13px;background:#f0f0f0;border-top:1px solid #e8e8e8;"></div><div style="left:353px;top:711px;width:436px;height:10px;background:linear-gradient(180deg,#f4f4f4,#d9d9d9);border:1px solid #c4c4c4;border-radius:3px;"></div><div style="left:320px;top:722px;width:538px;height:27px;background:#e9e9e9;border-top:1px solid #a9bce0;"></div><div style="left:336px;top:722px;width:57px;height:25px;background:linear-gradient(180deg,#fff 40%,#e6e6e6);border:1px solid #8f8f8f;border-top:none;border-right-color:#b8b8b8;border-radius:0 0 4px 4px;"></div><span class="t" style="left:345px;top:727px;line-height:16px;color:#000;letter-spacing:-0.227px;">Design</span><div style="left:392px;top:722px;width:40px;height:25px;background:#a6bde7;border-radius:0 0 4px 4px;"></div><span class="t" style="left:401px;top:727px;line-height:16px;color:#000;letter-spacing:-0.254px;">Text</span><div style="left:858px;top:98px;width:1px;height:651px;background:#8f8f8f;"></div><div style="left:859px;top:98px;width:421px;height:23px;background:linear-gradient(180deg,#e4e4e4,#d2d2d2);border-top:1px solid #a8a8a8;border-bottom:1px solid #9a9a9a;"></div><span class="t" style="left:864px;top:102px;line-height:16px;color:#5b6577;letter-spacing:-0.527px;">Preview</span><svg class="i" style="left:1232px;top:101px" width="16" height="16" viewBox="0 0 16 16"><g transform="translate(7 8)" fill="#6a6a6a"><rect x="-1.400" y="-6.200" width="2.800" height="3" transform="rotate(0)"/><rect x="-1.400" y="-6.200" width="2.800" height="3" transform="rotate(45)"/><rect x="-1.400" y="-6.200" width="2.800" height="3" transform="rotate(90)"/><rect x="-1.400" y="-6.200" width="2.800" height="3" transform="rotate(135)"/><rect x="-1.400" y="-6.200" width="2.800" height="3" transform="rotate(180)"/><rect x="-1.400" y="-6.200" width="2.800" height="3" transform="rotate(225)"/><rect x="-1.400" y="-6.200" width="2.800" height="3" transform="rotate(270)"/><rect x="-1.400" y="-6.200" width="2.800" height="3" transform="rotate(315)"/><circle r="4.300"/><circle r="1.500" fill="#fff" fill-opacity=".8"/></g><path d="M15.500 7h4.200l-2.100 2.700z" fill="#6a6a6a"/></svg><svg class="i" style="left:1259px;top:101px" width="16" height="16" viewBox="0 0 16 16"><rect x="11.600" y="3.500" width="2" height="10.500" fill="#f0f0f0" stroke="#676767" stroke-width="1.200"/><rect x="11" y="8.700" width="3.200" height="5.800" fill="#676767"/><path d="M1.700 6.600h7.500M6.700 4.200l2.500 2.400-2.500 2.400" fill="none" stroke="#676767" stroke-width="1.200"/></svg><div style="left:859px;top:121px;width:421px;height:70px;background:#e9e9e9;"></div><div style="left:897px;top:128px;width:1px;height:22px;background:#c6c6c6;"></div><div style="left:977px;top:128px;width:1px;height:22px;background:#c6c6c6;"></div><div style="left:1013px;top:128px;width:1px;height:22px;background:#c6c6c6;"></div><div style="left:1097px;top:128px;width:1px;height:22px;background:#c6c6c6;"></div><div style="left:1199px;top:128px;width:1px;height:22px;background:#c6c6c6;"></div><div style="left:1235px;top:128px;width:1px;height:22px;background:#c6c6c6;"></div><svg class="i" style="left:866px;top:129px" width="16" height="16" viewBox="0 0 16 16"><path d="M1.600 12.500V.800h6.300l3.100 3.100v5" fill="#f1f1f1" stroke="#8d8d8d" stroke-width="1.600"/><path d="M1.600 12.500h3.500" fill="none" stroke="#8d8d8d" stroke-width="1.600"/><path d="M7.700 .800v3.300h3.300" fill="none" stroke="#8d8d8d" stroke-width="1.100"/><g transform="translate(6 9.700) scale(.98)"><g fill="#7aa21d"><path d="M0 6a5 5 0 0 1 10 0z"/><path d="M1.500 .3l1.500 2M8.500 .3L7 2.300" stroke="#7aa21d" stroke-width=".8" fill="none"/></g><circle cx="3" cy="3.800" r=".8" fill="#fff"/><circle cx="7" cy="3.800" r=".8" fill="#fff"/></g></svg><div style="left:884px;top:137px;width:0px;height:0px;border-left:3px solid transparent;border-right:3px solid transparent;border-top:3.500px solid #2b3a55;"></div><svg class="i" style="left:901px;top:129px" width="16" height="16" viewBox="0 0 16 16"><rect x="2.200" y=".700" width="7" height="14.600" rx="1" fill="#f2f2f2" stroke="#858585" stroke-width="1.300"/><rect x="3.700" y="2.500" width="4" height="9.500" fill="#8cb92e"/><rect x="7.600" y="4.700" width="6" height="10.600" rx="1" fill="#f2f2f2" stroke="#858585" stroke-width="1.300"/><rect x="9" y="6.500" width="3.200" height="6" fill="#8cb92e"/><path d="M4.700 14h2M9.700 14.200h2" stroke="#444"/></svg><span class="t" style="left:919px;top:131px;line-height:16px;color:#000;letter-spacing:-0.719px;">Nexus 4</span><div style="left:960px;top:137px;width:0px;height:0px;border-left:3px solid transparent;border-right:3px solid transparent;border-top:3.500px solid #2b3a55;"></div><svg class="i" style="left:982px;top:129px" width="16" height="16" viewBox="0 0 16 16"><rect x="1" y="6.500" width="13.500" height="8.500" fill="#f4f4f4" stroke="#8d8d8d" stroke-width="1.500"/><path d="M2.300 4.300C5 .300 11 .300 14 4.500" fill="none" stroke="#4d8fc4" stroke-width="1.400"/><path d="M.800 1.500l.8 4 3.800-1z" fill="#4d8fc4"/></svg><div style="left:1000px;top:137px;width:0px;height:0px;border-left:3px solid transparent;border-right:3px solid transparent;border-top:3.500px solid #2b3a55;"></div><svg class="i" style="left:1018px;top:129px" width="16" height="16" viewBox="0 0 16 16"><circle cx="8" cy="8" r="6.300" fill="#f4f4f4" stroke="#7ea62a" stroke-width="1.700"/><path d="M8 3.800a4.200 4.200 0 0 1 0 8.400z" fill="#555"/><path d="M8 3.800a4.200 4.200 0 0 0 0 8.400z" fill="#c8c8c8"/></svg><span class="t" style="left:1035px;top:131px;line-height:16px;color:#000;letter-spacing:-0.588px;">AppTheme</span><svg class="i" style="left:1102px;top:129px" width="16" height="16" viewBox="0 0 16 16"><rect x="1" y="0" width="14" height="16" fill="#fafafa"/><rect x="1" y="0" width="14" height="2.700" fill="#7da328"/><path d="M1.500 5h13" stroke="#9a9a9a" stroke-width="1.400" stroke-dasharray="3.500 1.200"/></svg><span class="t" style="left:1119px;top:131px;line-height:16px;color:#000;letter-spacing:-0.168px;">MainActivity</span><div style="left:1183px;top:137px;width:0px;height:0px;border-left:3px solid transparent;border-right:3px solid transparent;border-top:3.500px solid #2b3a55;"></div><svg class="i" style="left:1204px;top:129px" width="16" height="16" viewBox="0 0 16 16"><defs><radialGradient id="gb" cx=".35" cy=".3" r=".8"><stop offset="0" stop-color="#9cc8ee"/><stop offset="1" stop-color="#3f83c0"/></radialGradient></defs><circle cx="8" cy="8" r="7" fill="url(#gb)"/><path d="M4 3.500c2-1 4-.5 4.500 1s-1.500 2-1 3.500 2.500 1 2.500 3-1.500 2.500-2.500 3.500c-1-1.500-.5-3-2-4S3 7.500 4 3.500zM11 3c1.500.5 3 2 3.300 4-1 .5-2-.5-2.500-1.500S10.500 4 11 3z" fill="#e8f2fb" opacity=".9"/></svg><div style="left:1222px;top:137px;width:0px;height:0px;border-left:3px solid transparent;border-right:3px solid transparent;border-top:3.500px solid #2b3a55;"></div><svg class="i" style="left:1240px;top:129px" width="16" height="16" viewBox="0 0 16 16"><g fill="#7aa21d"><path d="M4 5.900h7.800v6a.7.700 0 0 1-.7.700H4.700a.7.700 0 0 1-.7-.7z"/><path d="M4 4.900a3.900 3.300 0 0 1 7.800 0z"/><rect x=".900" y="5.900" width="1.900" height="5" rx=".9"/><rect x="13" y="5.900" width="1.900" height="5" rx=".9"/><rect x="5.200" y="12" width="1.800" height="2.900" rx=".8"/><rect x="8.800" y="12" width="1.800" height="2.900" rx=".8"/><path d="M5.200 .500l1 1.600M10.600 .500l-1 1.600" stroke="#7aa21d" stroke-width=".8" fill="none"/></g><circle cx="6.200" cy="3.400" r=".55" fill="#fff"/><circle cx="9.600" cy="3.400" r=".55" fill="#fff"/></svg><span class="t" style="left:1258px;top:131px;line-height:16px;color:#000;letter-spacing:-0.688px;">L</span><div style="left:1264px;top:137px;width:0px;height:0px;border-left:3px solid transparent;border-right:3px solid transparent;border-top:3.500px solid #2b3a55;"></div><div style="left:1084px;top:159px;width:24px;height:24px;background:#a4a4a4;border:1px solid #737373;border-radius:2.500px;"></div><svg class="i" style="left:1088px;top:163px" width="16" height="16" viewBox="0 0 16 16"><circle cx="7.500" cy="6.500" r="6" fill="#a6a6a6" stroke="#989898" stroke-width="1.200"/><path d="M12 11l3.500 3.500" stroke="#999" stroke-width="1.800" stroke-linecap="round"/><path d="M4.300 7.200V3.600h3.900v1.800H6.200v1.800zM10.800 5.900v3.700H6.800V7.800h2.100V5.900z" fill="#4f95d6"/></svg><svg class="i" style="left:1112px;top:163px" width="16" height="16" viewBox="0 0 16 16"><circle cx="7.500" cy="6.500" r="6" fill="#f4f4f4" stroke="#a0a0a0" stroke-width="1.200"/><path d="M12 11l3.300 3.300" stroke="#a0a0a0" stroke-width="2" stroke-linecap="round"/><g font-family="Liberation Sans,sans-serif" font-size="8" font-weight="700" fill="#4a8fd0"><text x="2.600" y="9.300" textLength="9.800" lengthAdjust="spacingAndGlyphs">1:1</text></g></svg><div style="left:1137px;top:160px;width:1px;height:23px;background:#c6c6c6;"></div><svg class="i" style="left:1143px;top:163px" width="16" height="16" viewBox="0 0 16 16"><circle cx="7.500" cy="6.500" r="6" fill="#f4f4f4" stroke="#a0a0a0" stroke-width="1.200"/><path d="M12 11l3.300 3.300" stroke="#a0a0a0" stroke-width="2" stroke-linecap="round"/><path d="M7.500 2.700v7.600M3.700 6.500h7.600" stroke="#5a97cf" stroke-width="3"/></svg><svg class="i" style="left:1168px;top:163px" width="16" height="16" viewBox="0 0 16 16"><circle cx="7.500" cy="6.500" r="6" fill="#f4f4f4" stroke="#a0a0a0" stroke-width="1.200"/><path d="M12 11l3.300 3.300" stroke="#a0a0a0" stroke-width="2" stroke-linecap="round"/><path d="M3.700 6.500h7.600" stroke="#5a97cf" stroke-width="3"/></svg><div style="left:1193px;top:160px;width:1px;height:23px;background:#c6c6c6;"></div><svg class="i" style="left:1200px;top:163px" width="16" height="16" viewBox="0 0 16 16"><path d="M8 2.200A5.800 5.800 0 0 0 3.600 11.800" fill="none" stroke="#3f8fc3" stroke-width="2.200"/><path d="M.900 14.900h6.900V8.400z" fill="#3f8fc3"/><path d="M8 13.800A5.800 5.800 0 0 0 12.400 4.200" fill="none" stroke="#3f8fc3" stroke-width="2.200"/><path d="M15.100 1.100H8.200v6.500z" fill="#3f8fc3"/></svg><svg class="i" style="left:1225px;top:163px" width="16" height="16" viewBox="0 0 16 16"><rect x="0" y="3" width="16" height="9.700" fill="#9a9a9a"/><rect x="1" y=".700" width="3" height="2" fill="#9a9a9a"/><circle cx="8" cy="7.900" r="3.700" fill="#f2f6fa"/><circle cx="8" cy="7.900" r="2.600" fill="#66aee6"/></svg><svg class="i" style="left:1256px;top:163px" width="16" height="16" viewBox="0 0 16 16"><g transform="translate(7 8)" fill="#3f8fce"><rect x="-1.400" y="-6.200" width="2.800" height="3" transform="rotate(0)"/><rect x="-1.400" y="-6.200" width="2.800" height="3" transform="rotate(45)"/><rect x="-1.400" y="-6.200" width="2.800" height="3" transform="rotate(90)"/><rect x="-1.400" y="-6.200" width="2.800" height="3" transform="rotate(135)"/><rect x="-1.400" y="-6.200" width="2.800" height="3" transform="rotate(180)"/><rect x="-1.400" y="-6.200" width="2.800" height="3" transform="rotate(225)"/><rect x="-1.400" y="-6.200" width="2.800" height="3" transform="rotate(270)"/><rect x="-1.400" y="-6.200" width="2.800" height="3" transform="rotate(315)"/><circle r="4.300"/><circle r="1.500" fill="#fff" fill-opacity=".8"/></g><path d="M12.500 13h4.500l-2.250 3z" fill="#333"/></svg><div style="left:862px;top:191px;width:415px;height:555px;background:#fff;border:1px solid #b9b9b9;"></div><svg class="i" style="left:910px;top:195px" width="300" height="545" viewBox="0 0 300 545"><defs><linearGradient id="pb" x1="0" y1="0" x2="1" y2="0"><stop offset="0" stop-color="#4c4c4c"/><stop offset=".018" stop-color="#5c5c5c"/><stop offset=".05" stop-color="#3a3a3a"/><stop offset=".07" stop-color="#303030"/><stop offset=".93" stop-color="#141414"/><stop offset=".965" stop-color="#1a1a1a"/><stop offset="1" stop-color="#333"/></linearGradient><linearGradient id="po" x1="0" y1="0" x2="0" y2="1"><stop offset="0" stop-color="#6e6e6e"/><stop offset=".25" stop-color="#555"/><stop offset=".6" stop-color="#484848"/><stop offset=".9" stop-color="#555"/><stop offset="1" stop-color="#727272"/></linearGradient><linearGradient id="pr" x1="0" y1="0" x2="0" y2="1"><stop offset="0" stop-color="#9a9a9a"/><stop offset=".07" stop-color="#555"/><stop offset=".5" stop-color="#333"/><stop offset=".93" stop-color="#3a3a3a"/><stop offset="1" stop-color="#777"/></linearGradient><linearGradient id="pd" x1="0" y1="0" x2="0" y2="1"><stop offset="0" stop-color="#000" stop-opacity="0"/><stop offset=".45" stop-color="#000" stop-opacity="0"/><stop offset=".9" stop-color="#000" stop-opacity=".55"/></linearGradient><linearGradient id="gl" x1="0" y1="0" x2="0" y2="1"><stop offset="0" stop-color="#fff" stop-opacity=".13"/><stop offset="1" stop-color="#fff" stop-opacity=".09"/></linearGradient><linearGradient id="gl2" x1="0" y1="0" x2="0" y2="1"><stop offset="0" stop-color="#fff" stop-opacity=".09"/><stop offset="1" stop-color="#fff" stop-opacity="0"/></linearGradient><linearGradient id="ch" x1="0" y1="0" x2="0" y2="1"><stop offset="0" stop-color="#1d1d1d" stop-opacity="0"/><stop offset=".36" stop-color="#1d1d1d" stop-opacity="1"/><stop offset="1" stop-color="#1b1b1b"/></linearGradient><radialGradient id="sh" cx=".5" cy=".5" r=".5"><stop offset="0" stop-color="#000" stop-opacity=".3"/><stop offset=".7" stop-color="#000" stop-opacity=".1"/><stop offset="1" stop-color="#000" stop-opacity="0"/></radialGradient><clipPath id="pc"><path d="M19 55C19 29.4 31.8 20 75 15Q150 7.5 225 15C268.2 20 281 29.4 281 55L281 487C281 508.6 268.2 516.5 225 521.5Q150 529 75 521.5C31.8 516.5 19 508.6 19 487Z"/></clipPath></defs><ellipse cx="150" cy="518" rx="152" ry="17" fill="url(#sh)"/><path d="M16 55C16 27 30 17 75 12Q150 4.5 225 12C270 17 284 27 284 55L284 487C284 511 270 519.5 225 524.5Q150 532 75 524.5C30 519.5 16 511 16 487Z" fill="url(#po)"/><path d="M17.5 55C17.5 28.2 30.9 18.5 75 13.5Q150 6 225 13.5C269.1 18.5 282.5 28.2 282.5 55L282.5 487C282.5 509.8 269.1 518 225 523Q150 530.5 75 523C30.9 518 17.5 509.8 17.5 487Z" fill="#0e0e0e"/><path d="M18.3 55C18.3 28.84 31.38 19.3 75 14.3Q150 6.8 225 14.3C268.62 19.3 281.7 28.84 281.7 55L281.7 487C281.7 509.16 268.62 517.2 225 522.2Q150 529.7 75 522.2C31.38 517.2 18.3 509.16 18.3 487Z" fill="url(#pr)"/><path d="M19 55C19 29.4 31.8 20 75 15Q150 7.5 225 15C268.2 20 281 29.4 281 55L281 487C281 508.6 268.2 516.5 225 521.5Q150 529 75 521.5C31.8 516.5 19 508.6 19 487Z" fill="url(#pb)"/><g clip-path="url(#pc)"><rect x="0" y="0" width="300" height="545" fill="url(#pd)"/><rect x="19" y="425" width="270" height="124" fill="url(#ch)"/><rect x="30" y="67" width="241" height="15" fill="#000"/><rect x="30" y="82" width="241" height="30" fill="#222"/><path d="M0 0H173 L169 21 L142 82 L130 111.5 H0z" fill="url(#gl)"/><rect x="0" y="111.5" width="30" height="230" fill="url(#gl2)"/><rect x="30" y="111.5" width="241" height="328" fill="#fff"/><rect x="30" y="439" width="241" height="30" fill="#000"/></g><rect x="30" y="111.5" width="241" height="1" fill="#000" opacity=".2"/><rect x="30" y="112.5" width="241" height="2" fill="#000" opacity=".08"/><path d="M121 15.8h58l-4 5.500h-50z" fill="#111"/><circle cx="246" cy="33.5" r="4.800" fill="#1d1d1d"/><circle cx="246" cy="33.5" r="3.300" fill="#101010"/><circle cx="246" cy="33.5" r="1.100" fill="#1c2048"/><circle cx="47" cy="34" r="2.300" fill="#fff" opacity=".045"/><circle cx="56" cy="34" r="2.300" fill="#fff" opacity=".045"/><g transform="translate(246 67.6)"><path d="M6.200 9.600L0 2.500a9.300 9.300 0 0 1 12.400 0z" fill="#2d9fd3"/><path d="M1.900 4.700a6.500 6.500 0 0 1 8.600 0M3.500 6.600a4 4 0 0 1 5.400 0" fill="none" stroke="#0a2a3a" stroke-width=".9"/></g><g transform="translate(261 67.1)"><rect x="0" y="1.200" width="6" height="8.800" fill="#2d9fd3"/><rect x="1.800" y="0" width="2.400" height="1.500" fill="#2d9fd3"/><path d="M3.700 2.500L1.700 6h1.400l-.7 3 2.300-3.800H3.300z" fill="#e8f6fc"/></g><g transform="translate(37 86.8) scale(1.250)"><g fill="#97c024"><path d="M4 5.900h7.800v6a.7.700 0 0 1-.7.700H4.700a.7.700 0 0 1-.7-.7z"/><path d="M4 4.900a3.900 3.300 0 0 1 7.800 0z"/><rect x=".900" y="5.900" width="1.900" height="5" rx=".9"/><rect x="13" y="5.900" width="1.900" height="5" rx=".9"/><rect x="5.200" y="12" width="1.800" height="2.900" rx=".8"/><rect x="8.800" y="12" width="1.800" height="2.900" rx=".8"/><path d="M5.200 .500l1 1.600M10.600 .500l-1 1.600" stroke="#97c024" stroke-width=".8" fill="none"/></g><circle cx="6.200" cy="3.400" r=".55" fill="#fff"/><circle cx="9.600" cy="3.400" r=".55" fill="#fff"/></g><path d="M44 95.7l3-1.400 3 1.400v3.500l-3 1.500-3-1.500z" fill="#fff" opacity=".92"/><rect x="251.6" y="90.4" width="3" height="3" fill="#a0a0a0"/><rect x="251.6" y="95.25" width="3" height="3" fill="#a0a0a0"/><rect x="251.6" y="100.1" width="3" height="3" fill="#a0a0a0"/><path d="M105.5 448L93 455L105.5 462z" fill="none" stroke="#f2f2f2" stroke-width="1.300" stroke-linejoin="round"/><circle cx="150" cy="455" r="7" fill="none" stroke="#f2f2f2" stroke-width="1.300"/><rect x="193.7" y="448.7" width="12.500" height="12.500" fill="none" stroke="#f2f2f2" stroke-width="1.300"/></svg><span class="t" style="left:969.5px;top:284.5px;line-height:16px;color:#ececec;font-size:12.5px;letter-spacing:-0.416px;">Instructional Nonsense</span><span class="t" style="left:949.5px;top:317px;line-height:12px;color:#3a3a3a;font-size:9.3px;letter-spacing:-0.215px;">Hello world!</span><div style="left:0px;top:749px;width:1280px;height:1px;background:#9a9a9a;"></div><div style="left:0px;top:750px;width:1280px;height:20px;background:#e9e9e9;border-top:1px solid #fafafa;"></div><svg class="i" style="left:4px;top:753px" width="16" height="16" viewBox="0 0 16 16"><rect x="1.500" y=".500" width="13" height="11" fill="#fafafa" stroke="#5a5a5a"/><rect x="4.500" y="2" width="7" height="8.500" fill="#c6c6c6"/><path d="M3.500 .500v11M12.500 .500v11M1.500 6h2M12.500 6h2" stroke="#5a5a5a"/><path d="M1 13.500h14" stroke="#5a5a5a"/></svg><div style="left:14.5px;top:765px;width:25px;height:14px;border:1px solid #3f74a3;border-radius:50%;background:linear-gradient(180deg,#b9cde0,#e4ebf2);"></div><span class="t" style="left:28px;top:752px;line-height:16px;color:#000;letter-spacing:-0.128px;">Gradle build finished in 13 sec (13 minutes ago)</span><div style="left:1091px;top:751px;width:1px;height:19px;background:#c8c8c8;"></div><div style="left:1111px;top:751px;width:1px;height:19px;background:#c8c8c8;"></div><div style="left:1158px;top:751px;width:1px;height:19px;background:#c8c8c8;"></div><div style="left:1210px;top:751px;width:1px;height:19px;background:#c8c8c8;"></div><span class="t" style="left:1115.5px;top:752px;line-height:16px;color:#000;letter-spacing:-1.336px;">CRLF</span><svg class="i" style="left:1147px;top:755px" width="7" height="10" viewBox="0 0 7 10"><path d="M1 4l2.500-3 2.500 3zM1 5.700l2.500 3 2.500-3z" fill="#333"/></svg><span class="t" style="left:1168.5px;top:752px;line-height:16px;color:#999;letter-spacing:-0.600px;">UTF-8</span><svg class="i" style="left:1216px;top:753px" width="16" height="16" viewBox="0 0 16 16"><path d="M2.600 6.500V5.200a2 2 0 0 1 4.200-.3V6.500" fill="none" stroke="#777" stroke-width="1.200"/><rect x="4" y="6.100" width="7" height="6" rx="1" fill="#777"/><path d="M5.800 8h3.400M7.500 8v2.800" stroke="#fff" stroke-width="1.200"/></svg><svg class="i" style="left:1238px;top:752px" width="16" height="16" viewBox="0 0 16 16"><path d="M3.600 6.300V4.200a4 3.200 0 0 1 8 0v2.100" fill="#f4f4f4" stroke="#6a6a6a" stroke-width="1"/><path d="M1.500 6.500h12.200" stroke="#6a6a6a" stroke-width="1.100"/><path d="M7.600 2.300v2" stroke="#6a6a6a" stroke-width="1"/><path d="M5.500 1.800v4M9.700 1.800v4" stroke="#ddd" stroke-width=".6"/><path d="M3.300 7.200C1.800 9.500 2.800 12.300 4.800 13.600h5.600c2-1.300 3-4.100 1.500-6.400" fill="#f4f4f4" stroke="#6a6a6a" stroke-width="1"/><path d="M5 9h1.800M8.500 9h1.800" stroke="#6a6a6a" stroke-width="1"/><path d="M5.200 12.300c.5-2.200 4.300-2.200 4.800 0" fill="none" stroke="#6a6a6a" stroke-width="1.200"/><path d="M3.200 14.400h3.200M8.800 14.400h3.200" stroke="#6a6a6a" stroke-width="1.100"/></svg><svg class="i" style="left:1261px;top:753px" width="16" height="16" viewBox="0 0 16 16"><path d="M2.500 1.200h8.800a1.500 1.500 0 0 1 1.500 1.500v5.800a1.500 1.500 0 0 1-1.500 1.500h-.300l-.200 2.600-2.300-2.600H2.500a1.500 1.500 0 0 1-1.500-1.500V2.700a1.500 1.500 0 0 1 1.500-1.500z" fill="#b2b2b2"/></svg></body></html>
